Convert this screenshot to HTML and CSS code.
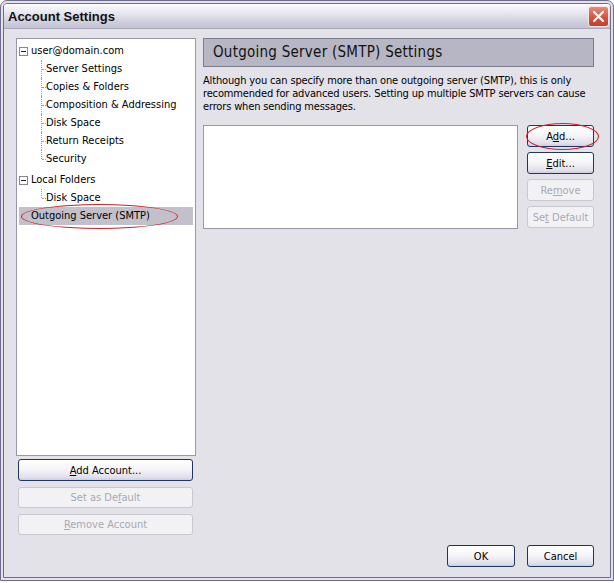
FILE: index.html
```html
<!DOCTYPE html>
<html lang="en">
<head>
<meta charset="utf-8">
<title>Account Settings</title>
<link rel="stylesheet" href="styles.css">
</head>
<body>
<div class="window">
  <div class="titlebar">
    <span class="title">Account Settings</span>
    <span class="close" aria-label="Close">
      <svg width="21" height="21" viewBox="0 0 21 21"><path d="M6 6 L15 15 M15 6 L6 15" stroke="#fff" stroke-width="2.2" stroke-linecap="round"/></svg>
    </span>
  </div>
  <div class="body">
    <div class="main">
      <div class="leftcol">
        <div class="tree">
          <div class="node">
            <div class="row account"><span class="twisty"></span>user@domain.com</div>
            <div class="children">
              <div class="row child">Server Settings</div>
              <div class="row child">Copies &amp; Folders</div>
              <div class="row child">Composition &amp; Addressing</div>
              <div class="row child">Disk Space</div>
              <div class="row child">Return Receipts</div>
              <div class="row child">Security</div>
            </div>
          </div>
          <div class="node node-local">
            <div class="row account"><span class="twisty"></span>Local Folders</div>
            <div class="children">
              <div class="row child">Disk Space</div>
            </div>
          </div>
          <div class="row selected">Outgoing Server (SMTP)<span class="ring ring-tree"></span></div>
        </div>
        <div class="leftbtns">
          <button class="btn btn-tall"><u>A</u>dd Account...</button>
          <button class="btn" disabled>Set as De<u>f</u>ault</button>
          <button class="btn" disabled><u>R</u>emove Account</button>
        </div>
      </div>
      <div class="rightcol">
        <div class="header">Outgoing Server (SMTP) Settings</div>
        <p class="desc">Although you can specify more than one outgoing server (SMTP), this is only<br>recommended for advanced users. Setting up multiple SMTP servers can cause<br>errors when sending messages.</p>
        <div class="listrow">
          <div class="listbox"></div>
          <div class="btncol">
            <button class="btn">A<u>d</u>d...<span class="ring ring-add"></span></button>
            <button class="btn"><u>E</u>dit...</button>
            <button class="btn" disabled>Re<u>m</u>ove</button>
            <button class="btn" disabled>Se<u>t</u> Default</button>
          </div>
        </div>
      </div>
    </div>
    <div class="footer">
      <button class="btn btn-dlg btn-ok">OK</button>
      <button class="btn btn-dlg">Cancel</button>
    </div>
  </div>
</div>
</body>
</html>
```

FILE: styles.css
```css
html, body {
  margin: 0;
  padding: 0;
  background: #ffffff;
}

body {
  font-family: "DejaVu Sans Condensed", "DejaVu Sans", sans-serif;
  font-stretch: condensed;
  font-size: 11px;
  color: #000;
}

.window {
  width: 614px;
  height: 581px;
  box-sizing: border-box;
  border: 4px double #6e6c8c;
  border-radius: 7px 7px 0 0;
  background: #e3e2e9;
  display: flex;
  flex-direction: column;
  overflow: hidden;
}

.titlebar {
  height: 24px;
  flex: none;
  display: flex;
  align-items: center;
  justify-content: space-between;
  padding: 0 1px 0 4px;
  background: linear-gradient(#fbfbfd 0%, #e9e8f0 35%, #d2d1de 70%, #c3c2d3 100%);
  border-bottom: 1px solid #a9a8bb;
}

.title {
  font-family: "Liberation Sans", sans-serif;
  font-stretch: normal;
  font-weight: bold;
  font-size: 13px;
  color: #111;
}

.close {
  width: 21px;
  height: 21px;
  box-sizing: border-box;
  border-radius: 3px;
  border: 1px solid #f3e6e6;
  background: linear-gradient(#e88a7a, #d4553f 55%, #c2402e);
  display: flex;
}

.close svg {
  margin: -1px;
}

.body {
  flex: 1;
  display: flex;
  flex-direction: column;
  padding: 9px 15px 10px 12px;
}

.main {
  display: flex;
  gap: 7px;
}

.leftcol {
  width: 180px;
  display: flex;
  flex-direction: column;
}

.tree {
  height: 418px;
  box-sizing: border-box;
  border: 1px solid #9897a8;
  background: #fff;
  padding: 3px 2px 2px;
}

.row {
  height: 18px;
  line-height: 18px;
  white-space: nowrap;
  position: relative;
}

.account {
  display: flex;
  align-items: center;
}

.twisty {
  width: 9px;
  height: 9px;
  box-sizing: border-box;
  border: 1px solid #85848f;
  background: #fff;
  margin-right: 3px;
  position: relative;
  flex: none;
}

.twisty::after {
  content: "";
  position: absolute;
  left: 1px;
  right: 1px;
  top: 3px;
  height: 1px;
  background: #222;
}

.node-local {
  margin-top: 3px;
}

.children {
  margin-left: 22px;
}

.child {
  padding-left: 5px;
}

.child::before {
  content: "";
  position: absolute;
  left: 0;
  top: 0;
  bottom: 0;
  border-left: 1px dotted #9e9da8;
}

.child:last-child::before {
  bottom: 9px;
}

.child::after {
  content: "";
  position: absolute;
  left: 1px;
  top: 9px;
  width: 4px;
  border-top: 1px dotted #9e9da8;
}

.selected {
  background: #c1c0cb;
  padding-left: 12px;
}

.ring {
  position: absolute;
  border: 1px solid #d0202a;
  border-radius: 50%;
  pointer-events: none;
}

.ring-tree {
  left: 2px;
  top: -3px;
  width: 155px;
  height: 23px;
}

.ring-add {
  left: -2px;
  top: -3px;
  width: 71px;
  height: 25px;
}

.leftbtns {
  display: flex;
  flex-direction: column;
  gap: 6px;
  padding: 3px 3px 0 2px;
}

.btn {
  font-family: inherit;
  font-stretch: condensed;
  font-size: 11px;
  color: #000;
  height: 21px;
  padding: 0;
  box-sizing: border-box;
  border: 1px solid #1f3563;
  border-radius: 3px;
  background: linear-gradient(#ffffff 0%, #f6f6f9 45%, #e2e1ec 85%, #cfcedd 100%);
  position: relative;
  cursor: default;
}

.btn u {
  text-underline-offset: 1px;
}

.btn:disabled {
  border-color: #c9c8d1;
  background: #f2f2f4;
  color: #a9a8b2;
}

.btn-tall {
  height: 22px;
}

.rightcol {
  width: 391px;
  display: flex;
  flex-direction: column;
}

.header {
  height: 29px;
  box-sizing: border-box;
  border: 1px solid #7d7c8c;
  background: #b7b6c4;
  font-size: 15px;
  letter-spacing: 0.25px;
  line-height: 27px;
  padding-left: 9px;
  color: #111;
}

.desc {
  margin: 7px 0 0 0;
  line-height: 13px;
  letter-spacing: -0.15px;
  white-space: nowrap;
}

.listrow {
  margin-top: 12px;
  display: flex;
  gap: 9px;
}

.listbox {
  width: 315px;
  height: 104px;
  box-sizing: border-box;
  border: 1px solid #9897a8;
  background: #fff;
}

.btncol {
  width: 67px;
  display: flex;
  flex-direction: column;
  gap: 5px;
}

.btncol .btn {
  height: 22px;
}

.footer {
  margin-top: auto;
  display: flex;
  justify-content: flex-end;
  gap: 12px;
  padding-right: 1px;
}

.btn-dlg {
  width: 67px;
  height: 22px;
}

.btn-ok {
  width: 68px;
}
```
